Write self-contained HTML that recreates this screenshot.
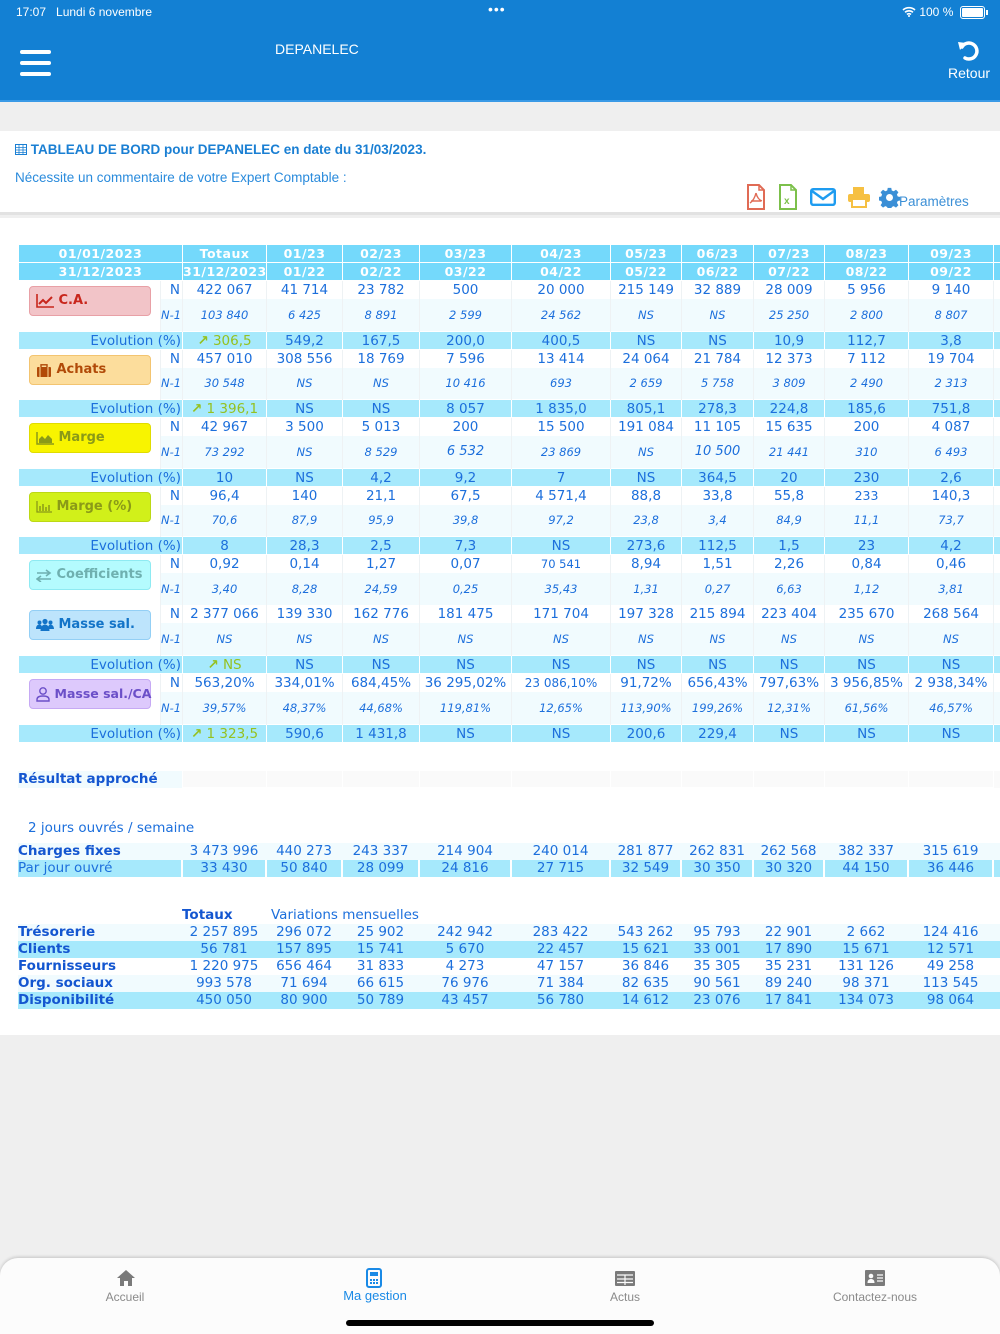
<!DOCTYPE html>
<html><head><meta charset="utf-8">
<style>
*{box-sizing:border-box;margin:0;padding:0}
body{width:1000px;height:1334px;background:#efefef;position:relative;overflow:hidden;font-family:"DejaVu Sans",Verdana,sans-serif;color:#1c6fdc}
.abs{position:absolute}
.top{left:0;top:0;width:1000px;height:102px;background:#1380d3;border-bottom:2px solid #3a9ae6}
.sb{font-family:"Liberation Sans",sans-serif;color:#fff;font-size:12px}
.card{left:0;top:131px;width:1000px;height:84px;background:#fff;border-bottom:3px solid #e2e2e2}
.main{left:0;top:218px;width:1000px;height:817px;background:#fff}
table{border-collapse:collapse;table-layout:fixed;position:absolute;left:18px}
td{padding:0;text-align:center;white-space:nowrap;overflow:hidden;font-size:13.5px;color:#1c6fdc}
tr.h td{background:#74d9fb;color:#fff;font-weight:bold;font-size:12.5px;height:18px;border:1px solid #fff;letter-spacing:.5px}
tr.n td{height:18px;background:#fff;border-left:1px solid #eef2f4;border-right:1px solid #eef2f4;line-height:16px}
tr.p td{height:32px;background:#f1fbfe;font-style:italic;font-size:11.5px;border-left:1px solid #eef2f4;border-right:1px solid #eef2f4}
tr.p.t td{height:33px}
tr.e td{height:18px;background:#a6e9fc;border:1px solid #fff;line-height:16px}
td.k{text-align:right;padding-right:2px}
td.lab{background:#fff !important;vertical-align:top;text-align:left;border:none !important}
td.ev{text-align:right;padding-right:1px}
.g{color:#95c11f}
.box{margin:5px 0 0 10px;width:122px;height:30px;border-radius:4px;font-weight:bold;font-size:13px;line-height:28px;padding-left:6px;display:flex;align-items:center;gap:5px}
.box svg{flex:none}
tr.b td{height:17px;line-height:15px;font-size:13.5px}
.bl{text-align:left !important;font-weight:bold;color:#1456d0 !important;font-size:13.5px}
.tab{left:0;top:1258px;width:1000px;height:76px;background:#fcfcfc;border-radius:18px 18px 0 0;box-shadow:0 -1px 3px rgba(0,0,0,.18)}
.tl{font-family:"Liberation Sans",sans-serif;font-size:12px;color:#8a8a8a;text-align:center;width:160px}
</style></head><body>
<div class="abs top"></div>
<div class="abs sb" style="left:16px;top:5px">17:07&nbsp;&nbsp; Lundi 6 novembre</div>
<div class="abs sb" style="left:488px;top:1px;font-size:14px;letter-spacing:1px">•••</div>
<div class="abs sb" style="left:902px;top:5px">
<svg width="14" height="11" viewBox="0 0 14 11" style="vertical-align:-1px"><path d="M1 4a9 9 0 0 1 12 0M3 6.3a6 6 0 0 1 8 0M5 8.5a3 3 0 0 1 4 0" stroke="#fff" stroke-width="1.6" fill="none"/><circle cx="7" cy="10" r="1" fill="#fff"/></svg> 100 %</div>
<div class="abs" style="left:960px;top:6px;width:25px;height:13px;border:1.5px solid #fff;border-radius:3px;padding:1px"><div style="background:#fff;width:100%;height:100%;border-radius:1px"></div></div>
<div class="abs" style="left:986px;top:10px;width:2px;height:5px;background:#fff"></div>
<div class="abs" style="left:20px;top:50px;width:31px;height:4px;background:#fff;border-radius:2px"></div>
<div class="abs" style="left:20px;top:61px;width:31px;height:4px;background:#fff;border-radius:2px"></div>
<div class="abs" style="left:20px;top:72px;width:31px;height:4px;background:#fff;border-radius:2px"></div>
<div class="abs sb" style="left:275px;top:41px;font-size:14px">DEPANELEC</div>
<svg class="abs" style="left:956px;top:38px" width="26" height="26" viewBox="0 0 26 26"><path d="M6 9A8 8 0 1 1 9 20" stroke="#fff" stroke-width="3.5" fill="none" stroke-linecap="round"/><path d="M2 4l8 1-6 7z" fill="#fff"/></svg>
<div class="abs sb" style="left:948px;top:65px;font-size:14px">Retour</div>

<div class="abs card"></div>
<div class="abs" style="left:15px;top:142px;font-family:'Liberation Sans',sans-serif;font-size:13.5px;font-weight:bold;color:#1a7fd3">
<svg width="12" height="11" viewBox="0 0 12 11" style="vertical-align:-1px"><rect x=".5" y=".5" width="11" height="10" fill="none" stroke="#1a7fd3"/><path d="M.5 3.5h11M.5 6h11M.5 8.5h11M4 .5v10M8 .5v10" stroke="#1a7fd3" stroke-width=".8"/></svg> TABLEAU DE BORD pour DEPANELEC en date du 31/03/2023.</div>
<div class="abs" style="left:15px;top:170px;font-family:'Liberation Sans',sans-serif;font-size:13.5px;color:#2a8bdc">Nécessite un commentaire de votre Expert Comptable :</div>
<svg class="abs" style="left:746px;top:184px" width="20" height="26" viewBox="0 0 20 26"><path d="M2 1h11l5 5v19H2z" fill="none" stroke="#e06b55" stroke-width="2"/><path d="M13 1v5h5" fill="none" stroke="#e06b55" stroke-width="1.5"/><path d="M10 9c-1 4-3 8-6 10M10 9c1 4 3 7 6 8M5 17h10" stroke="#e06b55" stroke-width="1.4" fill="none"/></svg>
<svg class="abs" style="left:778px;top:184px" width="20" height="26" viewBox="0 0 20 26"><path d="M2 1h11l5 5v19H2z" fill="none" stroke="#7cc04b" stroke-width="2"/><path d="M13 1v5h5" fill="none" stroke="#7cc04b" stroke-width="1.5"/><text x="6" y="20" font-size="10" font-weight="bold" fill="#7cc04b" font-family="Liberation Sans">x</text></svg>
<svg class="abs" style="left:810px;top:188px" width="26" height="18" viewBox="0 0 26 18"><rect x="1.2" y="1.2" width="23.6" height="15.6" rx="2" fill="none" stroke="#1e9cf0" stroke-width="2.4"/><path d="M2 3l11 8 11-8" fill="none" stroke="#1e9cf0" stroke-width="2.4"/></svg>
<svg class="abs" style="left:847px;top:186px" width="24" height="22" viewBox="0 0 24 22"><rect x="6" y="1" width="11" height="7" fill="#f6c042"/><rect x="1" y="8" width="22" height="8" rx="2" fill="#f6c042"/><rect x="5" y="13" width="14" height="8" fill="#fff" stroke="#f6c042" stroke-width="2"/></svg>
<svg class="abs" style="left:879px;top:187px" width="21" height="21" viewBox="0 0 24 24"><path fill="#3b8fd6" d="M10 1h4l.6 3 2.2.9 2.6-1.7 2.8 2.8-1.7 2.6.9 2.2 3 .6v4l-3 .6-.9 2.2 1.7 2.6-2.8 2.8-2.6-1.7-2.2.9-.6 3h-4l-.6-3-2.2-.9-2.6 1.7-2.8-2.8 1.7-2.6-.9-2.2-3-.6v-4l3-.6.9-2.2-1.7-2.6 2.8-2.8 2.6 1.7 2.2-.9zM12 8a4 4 0 1 0 0 8 4 4 0 0 0 0-8z"/></svg>
<div class="abs" style="left:899px;top:194px;font-family:'Liberation Sans',sans-serif;font-size:13.5px;color:#3b8fd6">Paramètres</div>

<div class="abs main"></div>

<table style="top:244px;width:982px">
<colgroup><col style="width:142px"><col style="width:22px"><col style="width:84px"><col style="width:76px"><col style="width:77px"><col style="width:92px"><col style="width:99px"><col style="width:71px"><col style="width:72px"><col style="width:71px"><col style="width:84px"><col style="width:85px"><col style="width:9px"></colgroup>
<tr class="h"><td colspan="2">01/01/2023</td><td>Totaux</td><td>01/23</td><td>02/23</td><td>03/23</td><td>04/23</td><td>05/23</td><td>06/23</td><td>07/23</td><td>08/23</td><td>09/23</td><td></td></tr>
<tr class="h"><td colspan="2">31/12/2023</td><td>31/12/2023</td><td>01/22</td><td>02/22</td><td>03/22</td><td>04/22</td><td>05/22</td><td>06/22</td><td>07/22</td><td>08/22</td><td>09/22</td><td></td></tr>

<tr class="n"><td class="lab" rowspan="2"><div class="box" style="background:#f2c4c8;border:1px solid #e8a0a6;color:#c8261c"><svg width="18" height="14" viewBox="0 0 18 14"><path d="M1 0v13h17" stroke="#c8261c" stroke-width="1.6" fill="none"/><path d="M3 10l4-4 3 3 6-6" stroke="#c8261c" stroke-width="2" fill="none"/></svg>C.A.</div></td><td class="k">N</td><td>422 067</td><td>41 714</td><td>23 782</td><td>500</td><td>20 000</td><td>215 149</td><td>32 889</td><td>28 009</td><td>5 956</td><td>9 140</td><td></td></tr>
<tr class="p t"><td class="k">N-1</td><td>103 840</td><td>6 425</td><td>8 891</td><td>2 599</td><td>24 562</td><td>NS</td><td>NS</td><td>25 250</td><td>2 800</td><td>8 807</td><td></td></tr>
<tr class="e"><td colspan="2" class="ev">Evolution (%)</td><td class="g"><b>&#x2197;</b> 306,5</td><td>549,2</td><td>167,5</td><td>200,0</td><td>400,5</td><td>NS</td><td>NS</td><td>10,9</td><td>112,7</td><td>3,8</td><td></td></tr>

<tr class="n"><td class="lab" rowspan="2"><div class="box" style="background:#fcdd9c;border:1px solid #f3c470;color:#b14a08"><svg width="16" height="13" viewBox="0 0 16 13"><rect x="1" y="3" width="14" height="10" rx="1" fill="#b14a08"/><rect x="5" y="0.8" width="6" height="3" fill="none" stroke="#b14a08" stroke-width="1.4"/><path d="M4 3v10M12 3v10" stroke="#fcdd9c"/></svg>Achats</div></td><td class="k">N</td><td>457 010</td><td>308 556</td><td>18 769</td><td>7 596</td><td>13 414</td><td>24 064</td><td>21 784</td><td>12 373</td><td>7 112</td><td>19 704</td><td></td></tr>
<tr class="p"><td class="k">N-1</td><td>30 548</td><td>NS</td><td>NS</td><td>10 416</td><td>693</td><td>2 659</td><td>5 758</td><td>3 809</td><td>2 490</td><td>2 313</td><td></td></tr>
<tr class="e"><td colspan="2" class="ev">Evolution (%)</td><td class="g"><b>&#x2197;</b> 1 396,1</td><td>NS</td><td>NS</td><td>8 057</td><td>1 835,0</td><td>805,1</td><td>278,3</td><td>224,8</td><td>185,6</td><td>751,8</td><td></td></tr>

<tr class="n"><td class="lab" rowspan="2"><div class="box" style="background:#f8f400;border:1px solid #e0dc00;color:#8a9a18"><svg width="18" height="13" viewBox="0 0 18 13"><path d="M1 0v12h17" stroke="#8a9a18" stroke-width="1.5" fill="none"/><path d="M3 11V7l3-3 3 3 3-4 4 4v4z" fill="#8a9a18"/></svg>Marge</div></td><td class="k">N</td><td>42 967</td><td>3 500</td><td>5 013</td><td>200</td><td>15 500</td><td>191 084</td><td>11 105</td><td>15 635</td><td>200</td><td>4 087</td><td></td></tr>
<tr class="p t"><td class="k">N-1</td><td>73 292</td><td>NS</td><td>8 529</td><td style="font-size:13px">6 532</td><td>23 869</td><td>NS</td><td style="font-size:13px">10 500</td><td>21 441</td><td>310</td><td>6 493</td><td></td></tr>
<tr class="e"><td colspan="2" class="ev">Evolution (%)</td><td>10</td><td>NS</td><td>4,2</td><td>9,2</td><td>7</td><td>NS</td><td>364,5</td><td>20</td><td>230</td><td>2,6</td><td></td></tr>

<tr class="n"><td class="lab" rowspan="2"><div class="box" style="background:#d1f01a;border:1px solid #bcd815;color:#8a9a18"><svg width="16" height="12" viewBox="0 0 16 12"><path d="M1 0v11h15" stroke="#8a9a18" stroke-width="1.3" fill="none"/><path d="M4 10V5M7 10V3M10 10V6M13 10V4" stroke="#8a9a18" stroke-width="1.5"/></svg>Marge (%)</div></td><td class="k">N</td><td>96,4</td><td>140</td><td>21,1</td><td>67,5</td><td>4 571,4</td><td>88,8</td><td>33,8</td><td>55,8</td><td style="font-size:12.5px">233</td><td>140,3</td><td></td></tr>
<tr class="p"><td class="k">N-1</td><td>70,6</td><td>87,9</td><td>95,9</td><td>39,8</td><td>97,2</td><td>23,8</td><td>3,4</td><td>84,9</td><td>11,1</td><td>73,7</td><td></td></tr>
<tr class="e"><td colspan="2" class="ev">Evolution (%)</td><td>8</td><td>28,3</td><td>2,5</td><td>7,3</td><td>NS</td><td>273,6</td><td>112,5</td><td>1,5</td><td>23</td><td>4,2</td><td></td></tr>

<tr class="n"><td class="lab" rowspan="2"><div class="box" style="background:#b4fbfe;border:1px solid #8eeaf2;color:#6fb0b0"><svg width="16" height="13" viewBox="0 0 16 13"><path d="M1 4h13M10 1l4 3-4 3M15 10H2M5 7l-4 3 4 3" stroke="#6fb0b0" stroke-width="1.6" fill="none"/></svg>Coefficients</div></td><td class="k">N</td><td>0,92</td><td>0,14</td><td>1,27</td><td>0,07</td><td style="font-size:11.5px">70 541</td><td>8,94</td><td>1,51</td><td>2,26</td><td>0,84</td><td>0,46</td><td></td></tr>
<tr class="p"><td class="k">N-1</td><td>3,40</td><td>8,28</td><td>24,59</td><td>0,25</td><td>35,43</td><td>1,31</td><td>0,27</td><td>6,63</td><td>1,12</td><td>3,81</td><td></td></tr>

<tr class="n"><td class="lab" rowspan="2"><div class="box" style="background:#bde4fc;border:1px solid #93cff5;color:#1374c8"><svg width="18" height="14" viewBox="0 0 18 14"><circle cx="9" cy="3.5" r="2.6" fill="#1374c8"/><circle cx="3.5" cy="4.5" r="2" fill="#1374c8"/><circle cx="14.5" cy="4.5" r="2" fill="#1374c8"/><path d="M4.5 13c0-4 2-6.5 4.5-6.5s4.5 2.5 4.5 6.5zM0 11c0-3 1.5-4.5 3.5-4.5S6 8 6 11zM12 11c0-3 1-4.5 2.5-4.5S18 8 18 11z" fill="#1374c8"/></svg>Masse sal.</div></td><td class="k">N</td><td>2 377 066</td><td>139 330</td><td>162 776</td><td>181 475</td><td>171 704</td><td>197 328</td><td>215 894</td><td>223 404</td><td>235 670</td><td>268 564</td><td></td></tr>
<tr class="p t"><td class="k">N-1</td><td>NS</td><td>NS</td><td>NS</td><td>NS</td><td>NS</td><td>NS</td><td>NS</td><td>NS</td><td>NS</td><td>NS</td><td></td></tr>
<tr class="e"><td colspan="2" class="ev">Evolution (%)</td><td class="g"><b>&#x2197;</b> NS</td><td>NS</td><td>NS</td><td>NS</td><td>NS</td><td>NS</td><td>NS</td><td>NS</td><td>NS</td><td>NS</td><td></td></tr>

<tr class="n"><td class="lab" rowspan="2"><div class="box" style="background:#ddc9fc;border:1px solid #c6a9f4;color:#6b4fc8;font-size:12.5px"><svg width="14" height="15" viewBox="0 0 14 15"><circle cx="7" cy="4" r="3.2" fill="none" stroke="#6b4fc8" stroke-width="1.4"/><path d="M1 14v-1.5C1 10 3 9 7 9s6 1 6 3.5V14z" fill="none" stroke="#6b4fc8" stroke-width="1.4"/></svg>Masse sal./CA</div></td><td class="k">N</td><td>563,20%</td><td>334,01%</td><td>684,45%</td><td>36 295,02%</td><td style="font-size:12px">23 086,10%</td><td>91,72%</td><td>656,43%</td><td>797,63%</td><td>3 956,85%</td><td>2 938,34%</td><td></td></tr>
<tr class="p t"><td class="k">N-1</td><td>39,57%</td><td>48,37%</td><td>44,68%</td><td>119,81%</td><td>12,65%</td><td>113,90%</td><td>199,26%</td><td>12,31%</td><td>61,56%</td><td>46,57%</td><td></td></tr>
<tr class="e"><td colspan="2" class="ev">Evolution (%)</td><td class="g"><b>&#x2197;</b> 1 323,5</td><td>590,6</td><td>1 431,8</td><td>NS</td><td>NS</td><td>200,6</td><td>229,4</td><td>NS</td><td>NS</td><td>NS</td><td></td></tr>
</table>

<table style="top:770px;width:982px">
<colgroup><col style="width:164px"><col style="width:84px"><col style="width:76px"><col style="width:77px"><col style="width:92px"><col style="width:99px"><col style="width:71px"><col style="width:72px"><col style="width:71px"><col style="width:84px"><col style="width:85px"><col style="width:9px"></colgroup>
<tr class="b"><td class="bl" style="background:#f1fbfe;border-right:1px solid #fff">Résultat approché</td><td style="background:#fafafa;border:1px solid #fff"></td><td style="background:#fafafa;border:1px solid #fff"></td><td style="background:#fafafa;border:1px solid #fff"></td><td style="background:#fafafa;border:1px solid #fff"></td><td style="background:#fafafa;border:1px solid #fff"></td><td style="background:#fafafa;border:1px solid #fff"></td><td style="background:#fafafa;border:1px solid #fff"></td><td style="background:#fafafa;border:1px solid #fff"></td><td style="background:#fafafa;border:1px solid #fff"></td><td style="background:#fafafa;border:1px solid #fff"></td><td style="background:#fafafa"></td></tr>
</table>
<div class="abs" style="left:28px;top:820px;font-size:13.5px;color:#1c6fdc">2 jours ouvrés / semaine</div>

<table style="top:843px;width:982px">
<colgroup><col style="width:164px"><col style="width:84px"><col style="width:76px"><col style="width:77px"><col style="width:92px"><col style="width:99px"><col style="width:71px"><col style="width:72px"><col style="width:71px"><col style="width:84px"><col style="width:85px"><col style="width:9px"></colgroup>
<tr class="b" style="background:#f1fbfe"><td class="bl">Charges fixes</td><td>3 473 996</td><td>440 273</td><td>243 337</td><td>214 904</td><td>240 014</td><td>281 877</td><td>262 831</td><td>262 568</td><td>382 337</td><td>315 619</td><td></td></tr>
<tr class="b" style="background:#a6e9fc"><td style="text-align:left;border-right:2px solid #fff">Par jour ouvré</td><td style="border-right:2px solid #fff">33 430</td><td style="border-right:2px solid #fff">50 840</td><td style="border-right:2px solid #fff">28 099</td><td style="border-right:2px solid #fff">24 816</td><td style="border-right:2px solid #fff">27 715</td><td style="border-right:2px solid #fff">32 549</td><td style="border-right:2px solid #fff">30 350</td><td style="border-right:2px solid #fff">30 320</td><td style="border-right:2px solid #fff">44 150</td><td style="border-right:2px solid #fff">36 446</td><td></td></tr>
</table>

<div class="abs" style="left:182px;top:907px;font-size:13.5px;font-weight:bold;color:#1456d0">Totaux</div>
<div class="abs" style="left:271px;top:907px;font-size:13.5px;color:#1c6fdc">Variations mensuelles</div>
<table style="top:924px;width:982px">
<colgroup><col style="width:164px"><col style="width:84px"><col style="width:76px"><col style="width:77px"><col style="width:92px"><col style="width:99px"><col style="width:71px"><col style="width:72px"><col style="width:71px"><col style="width:84px"><col style="width:85px"><col style="width:9px"></colgroup>
<tr class="b" style="background:#f1fbfe"><td class="bl">Trésorerie</td><td>2 257 895</td><td>296 072</td><td>25 902</td><td>242 942</td><td>283 422</td><td>543 262</td><td>95 793</td><td>22 901</td><td>2 662</td><td>124 416</td><td></td></tr>
<tr class="b" style="background:#a6e9fc"><td class="bl">Clients</td><td>56 781</td><td>157 895</td><td>15 741</td><td>5 670</td><td>22 457</td><td>15 621</td><td>33 001</td><td>17 890</td><td>15 671</td><td>12 571</td><td></td></tr>
<tr class="b" style="background:#fff"><td class="bl">Fournisseurs</td><td>1 220 975</td><td>656 464</td><td>31 833</td><td>4 273</td><td>47 157</td><td>36 846</td><td>35 305</td><td>35 231</td><td>131 126</td><td>49 258</td><td></td></tr>
<tr class="b" style="background:#f1fbfe"><td class="bl">Org. sociaux</td><td>993 578</td><td>71 694</td><td>66 615</td><td>76 976</td><td>71 384</td><td>82 635</td><td>90 561</td><td>89 240</td><td>98 371</td><td>113 545</td><td></td></tr>
<tr class="b" style="background:#a6e9fc"><td class="bl">Disponibilité</td><td>450 050</td><td>80 900</td><td>50 789</td><td>43 457</td><td>56 780</td><td>14 612</td><td>23 076</td><td>17 841</td><td>134 073</td><td>98 064</td><td></td></tr>
</table>

<div class="abs tab"></div>
<svg class="abs" style="left:116px;top:1269px" width="20" height="18" viewBox="0 0 20 18"><path d="M10 1L1 9h3v8h4v-5h4v5h4V9h3z" fill="#7a7a7a"/></svg>
<div class="abs tl" style="left:45px;top:1290px">Accueil</div>
<svg class="abs" style="left:366px;top:1268px" width="16" height="20" viewBox="0 0 16 20"><rect x="1" y="1" width="14" height="18" rx="2" fill="none" stroke="#1a8ae6" stroke-width="2"/><rect x="4" y="4" width="8" height="4" fill="#1a8ae6"/><path d="M4 11h2v2H4zM7 11h2v2H7zM10 11h2v2h-2zM4 14h2v2H4zM7 14h2v2H7zM10 14h2v2h-2z" fill="#1a8ae6"/></svg>
<div class="abs tl" style="left:295px;top:1288px;font-size:13px;color:#1a8ae6">Ma gestion</div>
<svg class="abs" style="left:615px;top:1271px" width="20" height="15" viewBox="0 0 20 15"><rect x="0" y="0" width="20" height="15" rx="1" fill="#7a7a7a"/><path d="M2 4h16M2 8h16M2 11.5h16M10 4v10" stroke="#fcfcfc" stroke-width="1.2"/></svg>
<div class="abs tl" style="left:545px;top:1290px">Actus</div>
<svg class="abs" style="left:865px;top:1270px" width="20" height="16" viewBox="0 0 20 16"><rect x="0" y="0" width="20" height="16" rx="1" fill="#7a7a7a"/><circle cx="6" cy="6" r="2.3" fill="#fcfcfc"/><path d="M2.5 13c0-3 1.5-4 3.5-4s3.5 1 3.5 4z" fill="#fcfcfc"/><path d="M12 5h6M12 8h6M12 11h6" stroke="#fcfcfc" stroke-width="1.3"/></svg>
<div class="abs tl" style="left:795px;top:1290px">Contactez-nous</div>
<div class="abs" style="left:346px;top:1320px;width:308px;height:6px;background:#000;border-radius:3px"></div>
</body></html>
